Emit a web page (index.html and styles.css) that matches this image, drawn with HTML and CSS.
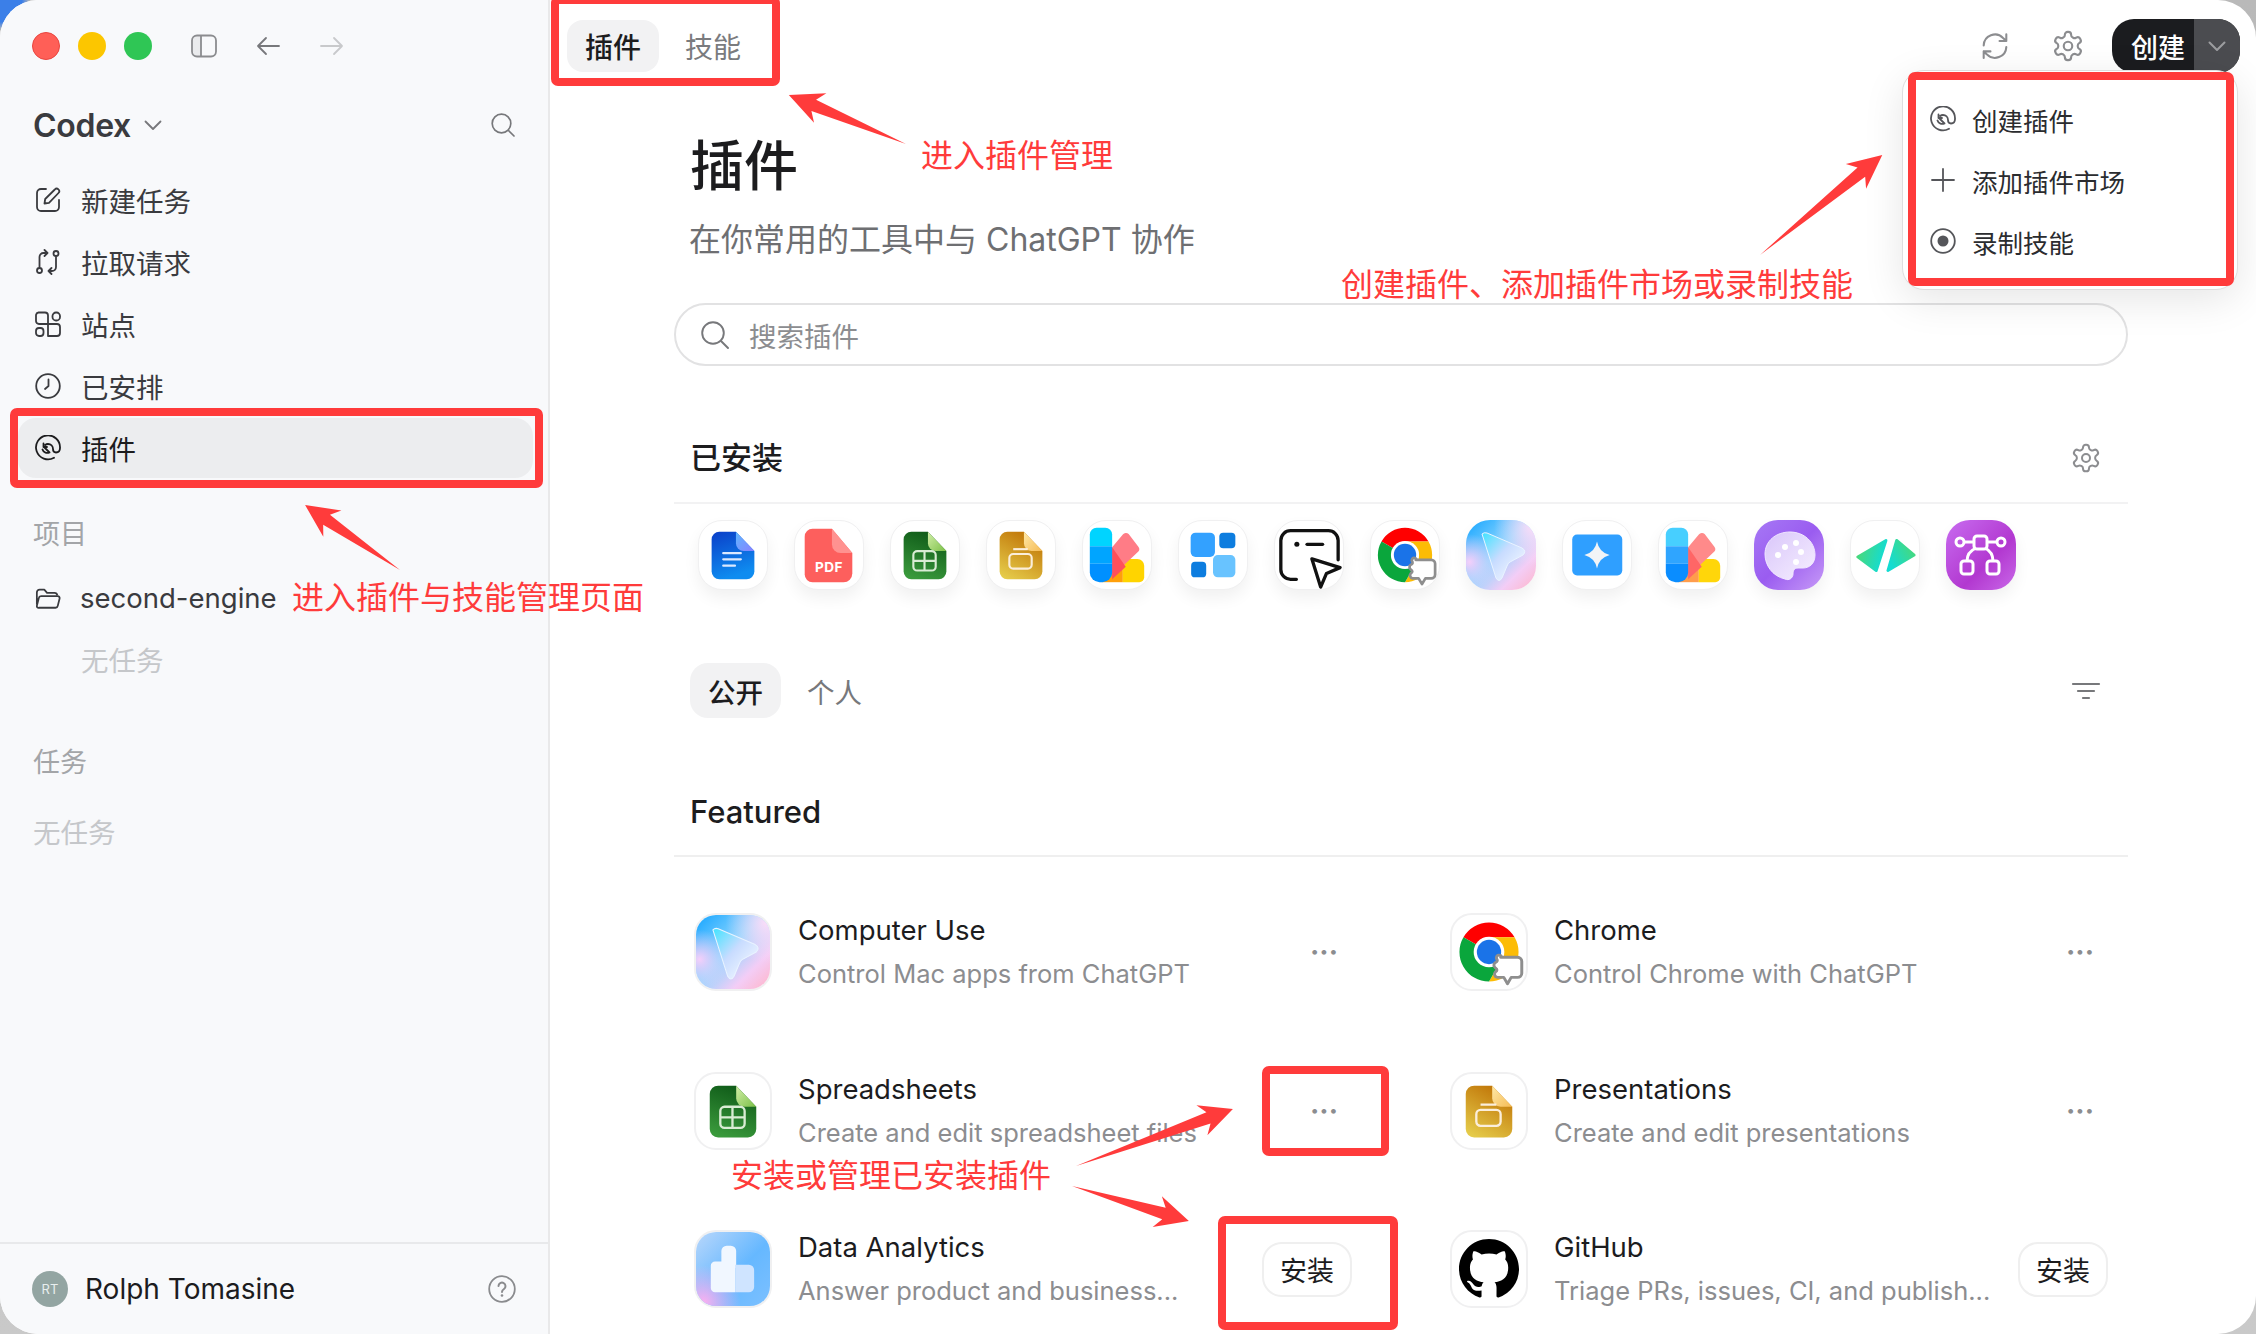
FILE: index.html
```html
<!DOCTYPE html>
<html lang="zh-CN">
<head>
<meta charset="utf-8">
<title>Codex 插件</title>
<link rel="stylesheet" href="styles.css">
</head>
<body>
<svg class="defs" aria-hidden="true">
  <defs>
    <linearGradient id="gDoc" x1="0" y1="0" x2="0.3" y2="1"><stop offset="0" stop-color="#0a3fc8"/><stop offset="1" stop-color="#0f8cf0"/></linearGradient>
    <linearGradient id="gDocF" x1="0" y1="0" x2="1" y2="1"><stop offset="0" stop-color="#5bb8ff"/><stop offset="1" stop-color="#8a80ff"/></linearGradient>
    <linearGradient id="gSheet" x1="0.6" y1="0" x2="0.3" y2="1"><stop offset="0" stop-color="#0f5a18"/><stop offset="1" stop-color="#3a9a3c"/></linearGradient>
    <linearGradient id="gSheetF" x1="0" y1="0" x2="1" y2="1"><stop offset="0" stop-color="#d2efa8"/><stop offset="1" stop-color="#7cc048"/></linearGradient>
    <linearGradient id="gSlide" x1="0.7" y1="0" x2="0.2" y2="1"><stop offset="0" stop-color="#bf7205"/><stop offset="1" stop-color="#e5cb4a"/></linearGradient>
    <linearGradient id="gSlideF" x1="0" y1="0" x2="1" y2="1"><stop offset="0" stop-color="#ffe9a8"/><stop offset="1" stop-color="#f5bb55"/></linearGradient>
    <linearGradient id="gCu" x1="0" y1="0" x2="1" y2="1"><stop offset="0" stop-color="#15a4ff"/><stop offset="0.45" stop-color="#8cd6ff"/><stop offset="0.75" stop-color="#f3cdf6"/><stop offset="1" stop-color="#ffb4c8"/></linearGradient>
    <radialGradient id="gCuP" cx="0.95" cy="0.1" r="0.55"><stop offset="0" stop-color="#fbdcf8"/><stop offset="1" stop-color="#fbdcf8" stop-opacity="0"/></radialGradient>
    <radialGradient id="gCuL" cx="0.05" cy="0.6" r="0.4"><stop offset="0" stop-color="#f4cffa"/><stop offset="1" stop-color="#f4cffa" stop-opacity="0"/></radialGradient>
    <linearGradient id="gCuA" x1="0" y1="0" x2="1" y2="1"><stop offset="0" stop-color="#3fe3ff"/><stop offset="0.45" stop-color="#c8dcff"/><stop offset="1" stop-color="#ffffff"/></linearGradient>
    <linearGradient id="gPal" x1="0" y1="0" x2="1" y2="1"><stop offset="0" stop-color="#a678f5"/><stop offset="0.5" stop-color="#9a5cf0"/><stop offset="1" stop-color="#c79af7"/></linearGradient>
    <linearGradient id="gPalW" x1="0" y1="0" x2="1" y2="1"><stop offset="0" stop-color="#d9c6fa"/><stop offset="1" stop-color="#f6efff"/></linearGradient>
    <linearGradient id="gCode" x1="0" y1="0" x2="1" y2="0.3"><stop offset="0" stop-color="#4fd870"/><stop offset="1" stop-color="#14dcd2"/></linearGradient>
    <linearGradient id="gCode2" x1="1" y1="0" x2="0" y2="0.6"><stop offset="0" stop-color="#4fd870"/><stop offset="1" stop-color="#14dcd2"/></linearGradient>
    <linearGradient id="gBez" x1="0" y1="0" x2="1" y2="1"><stop offset="0" stop-color="#c86cf0"/><stop offset="0.6" stop-color="#b238d0"/><stop offset="1" stop-color="#c968e8"/></linearGradient>
    <linearGradient id="gData" x1="0" y1="0" x2="1" y2="1"><stop offset="0" stop-color="#b9d7fb"/><stop offset="0.55" stop-color="#66b8ff"/><stop offset="1" stop-color="#7cc0ff"/></linearGradient>
    <radialGradient id="gDataP" cx="0.1" cy="0.95" r="0.5"><stop offset="0" stop-color="#fbb0f0"/><stop offset="1" stop-color="#fbb0f0" stop-opacity="0"/></radialGradient>

    <symbol id="i-docs" viewBox="0 0 70 70">
      <path fill="url(#gDoc)" d="M21 11h17l19 20v21a8 8 0 0 1-8 8H21a8 8 0 0 1-8-8V19a8 8 0 0 1 8-8z"/>
      <path fill="url(#gDocF)" d="M38 11l19 20H46a8 8 0 0 1-8-8z"/>
      <path fill="none" stroke="#dbe9ff" stroke-width="2.4" stroke-linecap="round" d="M25 33h18M25 39.500h18M25 46h12"/>
    </symbol>
    <symbol id="i-pdf" viewBox="0 0 70 70">
      <path fill="#fd5f5d" d="M18 8h20l21 25v21a9 9 0 0 1-9 9H18a8 8 0 0 1-8-8V16a8 8 0 0 1 8-8z"/>
      <path fill="#ff9290" d="M38 8l21 25H47a9 9 0 0 1-9-9z"/>
      <text x="35" y="53" text-anchor="middle" class="pdf-text">PDF</text>
    </symbol>
    <symbol id="i-sheet" viewBox="0 0 70 70">
      <path fill="url(#gSheet)" d="M21 11h17l19 20v21a8 8 0 0 1-8 8H21a8 8 0 0 1-8-8V19a8 8 0 0 1 8-8z"/>
      <path fill="url(#gSheetF)" d="M38 11l19 20H46a8 8 0 0 1-8-8z"/>
      <rect x="23" y="31" width="23" height="20" rx="4" fill="none" stroke="#d9ecd4" stroke-width="2.2"/>
      <path fill="none" stroke="#d9ecd4" stroke-width="2.2" d="M34.500 31v20M23 41h23"/>
    </symbol>
    <symbol id="i-slide" viewBox="0 0 70 70">
      <path fill="url(#gSlide)" d="M21 11h17l19 20v21a8 8 0 0 1-8 8H21a8 8 0 0 1-8-8V19a8 8 0 0 1 8-8z"/>
      <path fill="url(#gSlideF)" d="M38 11l19 20H46a8 8 0 0 1-8-8z"/>
      <rect x="23" y="34" width="23" height="15" rx="4" fill="none" stroke="#fbeedb" stroke-width="2.2"/>
      <path fill="none" stroke="#fbeedb" stroke-width="2.200" d="M27 29h15"/>
    </symbol>
    <symbol id="i-swatch" viewBox="0 0 70 70">
      <path fill="#ff9f0a" d="M20 48h21v15H20z"/>
      <path fill="#ffd400" d="M41 39h15a7 7 0 0 1 7 7v12a5 5 0 0 1-5 5H41z"/>
      <path fill="#ff7c86" d="M30 27l11-13a4 4 0 0 1 6-.500l10 13a4 4 0 0 1 0 5L30 57z"/>
      <path fill="#ff4f5a" d="M30 27l14 20-14 13z"/>
      <path fill="#00d4ff" d="M14 7h9a7 7 0 0 1 7 7v12H7V14a7 7 0 0 1 7-7z"/>
      <path fill="#00a5ff" d="M7 26h23v18H7z"/>
      <path fill="#0090ff" d="M7 44h23v9a10 10 0 0 1-10 10h-3a10 10 0 0 1-10-10z"/>
    </symbol>
    <symbol id="i-swatch2" viewBox="0 0 70 70">
      <path fill="#ff9d4c" d="M20 48h21v15H20z"/>
      <path fill="#ffd60a" d="M41 39h15a7 7 0 0 1 7 7v12a5 5 0 0 1-5 5H41z"/>
      <path fill="#ff8a8a" d="M30 27l11-13a4 4 0 0 1 6-.500l10 13a4 4 0 0 1 0 5L30 57z"/>
      <path fill="#ff6666" d="M30 27l14 20-14 13z"/>
      <path fill="#47cfff" d="M14 7h9a7 7 0 0 1 7 7v12H7V14a7 7 0 0 1 7-7z"/>
      <path fill="#2fa5ff" d="M7 26h23v18H7z"/>
      <path fill="#0a8dff" d="M7 44h23v9a10 10 0 0 1-10 10h-3a10 10 0 0 1-10-10z"/>
    </symbol>
    <symbol id="i-blocks" viewBox="0 0 70 70">
      <rect x="12" y="12" width="25" height="25" rx="5" fill="#33a1ff"/>
      <rect x="41.500" y="12" width="16.500" height="16" rx="4" fill="#0d7ddf"/>
      <rect x="12.500" y="42" width="15.500" height="16" rx="4" fill="#0d7ddf"/>
      <rect x="35" y="35" width="23" height="23" rx="5" fill="#68c3ff"/>
    </symbol>
    <symbol id="i-cursor" viewBox="0 0 70 70">
      <path fill="none" stroke="#111" stroke-width="3.400" stroke-linecap="round" d="M22 60h-6A10 10 0 0 1 6 50V20a10 10 0 0 1 10-10h39a10 10 0 0 1 10 10v20"/>
      <circle cx="22.500" cy="24" r="2.600" fill="#111"/>
      <path stroke="#111" stroke-width="3.400" stroke-linecap="round" d="M33 24h16"/>
      <path fill="#fff" stroke="#111" stroke-width="3.400" stroke-linejoin="round" d="M38 39l29 9-14 6-6 14z"/>
    </symbol>
    <symbol id="i-chrome" viewBox="0 0 70 70">
      <path fill="#f00" d="M35 7a28 28 0 0 1 24.200 14H35a14 14 0 0 0-12.100 7L10.800 21A28 28 0 0 1 35 7z"/>
      <path fill="#fcbc05" d="M59.200 21A28 28 0 0 1 35 63l12.100-21A14 14 0 0 0 35 21z"/>
      <path fill="#0aa63c" d="M10.800 21A28 28 0 0 0 35 63l12.100-21a14 14 0 0 1-24.200-14z"/>
      <circle cx="35" cy="35" r="14.500" fill="#fff"/>
      <circle cx="35" cy="35" r="11.500" fill="#1a73e8"/>
      <path fill="#fff" stroke="#8e8e8e" stroke-width="2.800" stroke-linejoin="round" d="M46 40h16a4 4 0 0 1 4 4v11a4 4 0 0 1-4 4h-6l-3.500 6-3.500-6h-6a3 3 0 0 1-2-5q3-2 0-4a3 3 0 0 1 0-5q3-1 1-4a1 1 0 0 1 5-1z"/>
    </symbol>
    <symbol id="i-cu" viewBox="0 0 70 70">
      <rect width="70" height="70" rx="14" fill="url(#gCu)"/>
      <rect width="70" height="70" rx="14" fill="url(#gCuP)"/>
      <rect width="70" height="70" rx="14" fill="url(#gCuL)"/>
      <path fill="url(#gCuA)" stroke="#e9f3ff" stroke-width="1" stroke-linejoin="round" d="M16 14q2-2 5-1l35 15q5 3 1 7l-13 7q-2 1-3 4l-5 12q-3 5-6 0z"/>
    </symbol>
    <symbol id="i-spark" viewBox="0 0 70 70">
      <rect x="9.500" y="14" width="51.500" height="42" rx="5" fill="#2f9fff"/>
      <path fill="#f2f4f7" d="M35 21q2 11 13 14-11 3-13 14-2-11-13-14 11-3 13-14z"/>
    </symbol>
    <symbol id="i-palette" viewBox="0 0 70 70">
      <rect width="70" height="70" rx="15" fill="url(#gPal)"/>
      <path fill="url(#gPalW)" stroke="#f1e8ff" d="M36 12c14 0 25 10 25 23 0 9-6 13-12 13h-5c-4 0-5 3-5 6 0 4-4 7-8 5C18 56 11 45 11 34c0-13 11-22 25-22z"/>
      <g fill="#fff"><circle cx="24" cy="35" r="3"/><circle cx="31" cy="27" r="3"/><circle cx="42" cy="23" r="3"/><circle cx="47" cy="32" r="3"/><circle cx="42" cy="42" r="3"/></g>
    </symbol>
    <symbol id="i-code" viewBox="0 0 70 70">
      <path fill="url(#gCode)" stroke="url(#gCode)" stroke-width="3" stroke-linejoin="round" d="M36 20L7 37l19 14z"/>
      <path fill="url(#gCode2)" stroke="url(#gCode2)" stroke-width="3" stroke-linejoin="round" d="M47 20l18 15-27 16z"/>
    </symbol>
    <symbol id="i-bezier" viewBox="0 0 70 70">
      <rect width="70" height="70" rx="15" fill="url(#gBez)"/>
      <g fill="none" stroke="#fff" stroke-width="3">
        <path d="M18 22h10M41 22h10M30 28Q21 32 21 41M39 28q8 4 8 13"/>
        <circle cx="14" cy="22" r="4"/><circle cx="55" cy="22" r="4"/>
        <rect x="28" y="16" width="13" height="13" rx="3"/>
        <rect x="15" y="41" width="12" height="13" rx="3"/>
        <rect x="41" y="41" width="12" height="13" rx="3"/>
      </g>
    </symbol>
    <symbol id="i-data" viewBox="0 0 70 70">
      <rect width="70" height="70" rx="15" fill="url(#gData)"/>
      <rect width="70" height="70" rx="15" fill="url(#gDataP)"/>
      <path fill="#f1f7ff" d="M14 32a4 4 0 0 1 4-4h6V18a5 5 0 0 1 5-5h4a5 5 0 0 1 5 5v16h-1v23H18a4 4 0 0 1-4-4z"/>
      <path fill="#cfe4ff" d="M37 31h13a5 5 0 0 1 5 5v16a5 5 0 0 1-5 5H37z"/>
    </symbol>
    <symbol id="i-github" viewBox="0 0 16 16">
      <path fill="#000" d="M8 0C3.580 0 0 3.580 0 8c0 3.540 2.290 6.530 5.470 7.590.4.070.55-.17.55-.38 0-.19-.01-.82-.01-1.490-2.010.37-2.530-.49-2.690-.94-.09-.23-.48-.94-.82-1.130-.28-.15-.68-.52-.01-.53.63-.01 1.080.58 1.230.82.72 1.210 1.870.87 2.330.66.07-.52.28-.87.51-1.070-1.780-.2-3.640-.89-3.640-3.950 0-.87.31-1.590.82-2.150-.08-.2-.36-1.020.08-2.120 0 0 .67-.21 2.200.82.64-.18 1.320-.27 2-.27.68 0 1.360.09 2 .27 1.530-1.040 2.200-.82 2.200-.82.44 1.100.16 1.920.08 2.120.51.56.82 1.270.82 2.150 0 3.070-1.870 3.750-3.650 3.950.29.25.54.73.54 1.480 0 1.070-.01 1.930-.01 2.200 0 .21.15.46.55.38A8.013 8.013 0 0 0 16 8c0-4.420-3.580-8-8-8z"/>
    </symbol>
    <symbol id="i-plug" viewBox="0 0 26 26">
      <path fill="none" stroke="currentColor" stroke-width="1.800" stroke-linecap="round" stroke-linejoin="round" d="M19 22.800A12 12 0 1 1 25 13c0 2.500-1.500 4.500-4 4.500-2 0-3-1.500-3-3.500 0-3-2.200-5-5-5-1 0-2 .3-2.800 1M8.500 8.500v3.500H12M9 12l5.500 5.500c-2.500 1-6 .3-7-3"/>
    </symbol>
    <symbol id="i-gear" viewBox="0 0 24 24">
      <path fill="none" stroke="currentColor" stroke-width="1.500" stroke-linejoin="round" d="M12.220 2h-.44a2 2 0 0 0-2 2v.18a2 2 0 0 1-1 1.730l-.43.25a2 2 0 0 1-2 0l-.15-.08a2 2 0 0 0-2.730.73l-.22.38a2 2 0 0 0 .73 2.730l.15.1a2 2 0 0 1 1 1.720v.51a2 2 0 0 1-1 1.740l-.15.09a2 2 0 0 0-.73 2.730l.22.38a2 2 0 0 0 2.730.73l.15-.08a2 2 0 0 1 2 0l.43.25a2 2 0 0 1 1 1.730V20a2 2 0 0 0 2 2h.44a2 2 0 0 0 2-2v-.18a2 2 0 0 1 1-1.730l.43-.25a2 2 0 0 1 2 0l.15.08a2 2 0 0 0 2.730-.73l.22-.39a2 2 0 0 0-.73-2.730l-.15-.08a2 2 0 0 1-1-1.740v-.5a2 2 0 0 1 1-1.740l.15-.09a2 2 0 0 0 .73-2.730l-.22-.38a2 2 0 0 0-2.730-.73l-.15.08a2 2 0 0 1-2 0l-.43-.25a2 2 0 0 1-1-1.730V4a2 2 0 0 0-2-2z"/>
      <circle cx="12" cy="12" r="3" fill="none" stroke="currentColor" stroke-width="1.500"/>
    </symbol>
  </defs>
</svg>

<div class="window">
  <aside class="sidebar">
    <div class="chrome-row">
      <span class="light light-red"></span><span class="light light-yellow"></span><span class="light light-green"></span>
      <svg class="ico-toggle" viewBox="0 0 26 24"><rect x="1" y="1.500" width="24" height="21" rx="5" fill="none" stroke="currentColor" stroke-width="1.800"/><path d="M10 2v20" stroke="currentColor" stroke-width="1.800"/><path d="M2 6.500a4 4 0 0 1 4-4h4v19H6a4 4 0 0 1-4-4z" fill="currentColor" opacity=".12"/></svg>
      <svg class="ico-arrow" viewBox="0 0 24 20"><path d="M23 10H2M10 2l-8 8 8 8" fill="none" stroke="currentColor" stroke-width="1.800" stroke-linecap="round" stroke-linejoin="round"/></svg>
      <svg class="ico-arrow ico-arrow-off" viewBox="0 0 24 20"><path d="M1 10h21M14 2l8 8-8 8" fill="none" stroke="currentColor" stroke-width="1.800" stroke-linecap="round" stroke-linejoin="round"/></svg>
    </div>
    <div class="brand-row">
      <span class="brand">Codex</span>
      <svg class="ico-chev" viewBox="0 0 18 11"><path d="M1.500 1.500L9 9l7.500-7.500" fill="none" stroke="currentColor" stroke-width="1.800" stroke-linecap="round" stroke-linejoin="round"/></svg>
      <svg class="ico-search" viewBox="0 0 24 24"><circle cx="10.500" cy="10.500" r="9.300" fill="none" stroke="currentColor" stroke-width="1.700"/><path d="M17.500 17.500l5.500 5.500" stroke="currentColor" stroke-width="1.700" stroke-linecap="round"/></svg>
    </div>
    <nav class="nav">
      <a class="nav-item"><svg class="nav-ico" viewBox="0 0 26 26"><path d="M11 2H6a4 4 0 0 0-4 4v14a4 4 0 0 0 4 4h14a4 4 0 0 0 4-4v-7" fill="none" stroke="currentColor" stroke-width="1.800" stroke-linecap="round"/><path d="M9.500 16.500l.7-4.500L19.800 2.500a2.500 2.500 0 0 1 3.700 3.500L14 15.800z" fill="none" stroke="currentColor" stroke-width="1.800" stroke-linejoin="round"/></svg>新建任务</a>
      <a class="nav-item"><svg class="nav-ico" viewBox="0 0 26 26"><g fill="none" stroke="currentColor" stroke-width="1.800" stroke-linecap="round" stroke-linejoin="round"><circle cx="4.500" cy="21.500" r="2.500"/><circle cx="21" cy="4.500" r="2.500"/><path d="M4.500 18V8a4 4 0 0 1 4-4H12M9.500 1L12.500 4l-3 3M21 8v10a4 4 0 0 1-4 4h-3.500M16.500 19l-3 3 3 3"/></g></svg>拉取请求</a>
      <a class="nav-item"><svg class="nav-ico" viewBox="0 0 26 26"><g fill="none" stroke="currentColor" stroke-width="1.800" stroke-linejoin="round"><path d="M4 1.500h6a3 3 0 0 1 3 3v8.500H4a3 3 0 0 1-3-3V4a3 3 0 0 1 2.500-2.500z"/><rect x="17.500" y="1.500" width="7.500" height="8" rx="3.500"/><rect x="1" y="17" width="7.500" height="8" rx="3"/><path d="M13 13h9a3 3 0 0 1 3 3v6a3 3 0 0 1-3 3h-9z"/></g></svg>站点</a>
      <a class="nav-item"><svg class="nav-ico" viewBox="0 0 26 26"><circle cx="13" cy="13" r="11.800" fill="none" stroke="currentColor" stroke-width="1.800"/><path d="M13.500 6.500V13l-3.500 3" fill="none" stroke="currentColor" stroke-width="1.800" stroke-linecap="round" stroke-linejoin="round"/></svg>已安排</a>
      <a class="nav-item nav-item-active"><svg class="nav-ico"><use href="#i-plug"/></svg>插件</a>
    </nav>
    <div class="side-label side-label-first">项目</div>
    <div class="project"><svg class="nav-ico" viewBox="0 0 28 26"><path d="M2 20V7a3 3 0 0 1 3-3h5l3 3.500h8a3 3 0 0 1 3 2.500M4 23.500h18a2.500 2.500 0 0 0 2.500-2l2-8a2 2 0 0 0-2-2.500H6.500a2.500 2.500 0 0 0-2.400 2L2 21.500a1.700 1.700 0 0 0 2 2z" fill="none" stroke="currentColor" stroke-width="1.900" stroke-linejoin="round"/></svg>second-engine</div>
    <div class="empty empty-indent">无任务</div>
    <div class="side-label side-label-second">任务</div>
    <div class="empty empty-flat">无任务</div>
    <footer class="side-foot">
      <span class="avatar">RT</span>
      <span class="user">Rolph Tomasine</span>
      <svg class="ico-help" viewBox="0 0 28 28"><circle cx="14" cy="14" r="12.800" fill="none" stroke="currentColor" stroke-width="1.800"/><path d="M10.500 11a3.500 3.500 0 1 1 5.500 3c-1.300.9-2 1.500-2 3" fill="none" stroke="currentColor" stroke-width="2" stroke-linecap="round"/><circle cx="14" cy="20.500" r="1.300" fill="currentColor"/></svg>
    </footer>
  </aside>

  <main class="main">
    <header class="topbar">
      <div class="tabs"><span class="tab tab-active">插件</span><span class="tab">技能</span></div>
      <div class="top-actions">
        <svg class="ico-top ico-refresh" viewBox="0 0 26 26"><path d="M2.500 12.500A10.500 10.500 0 0 1 20.500 5.500l3 2.800M23.500 2v6.300h-6.300M23.500 14A10.500 10.500 0 0 1 5.500 20.800l-3-2.800M2.500 24.200V18h6.300" fill="none" stroke="currentColor" stroke-width="1.900" stroke-linecap="round" stroke-linejoin="round"/></svg>
        <svg class="ico-top ico-gear"><use href="#i-gear"/></svg>
        <div class="create"><span class="create-main">创建</span><span class="create-chev"><svg viewBox="0 0 18 11"><path d="M1.500 1.500L9 9l7.500-7.500" fill="none" stroke="currentColor" stroke-width="2" stroke-linecap="round" stroke-linejoin="round"/></svg></span></div>
      </div>
    </header>

    <section class="content">
      <h1 class="title">插件</h1>
      <p class="subtitle">在你常用的工具中与 ChatGPT 协作</p>
      <div class="search">
        <svg class="ico-search2" viewBox="0 0 28 28"><circle cx="12" cy="12" r="10.800" fill="none" stroke="currentColor" stroke-width="1.900"/><path d="M20 20l7 7" stroke="currentColor" stroke-width="1.900" stroke-linecap="round"/></svg>
        <span class="placeholder">搜索插件</span>
      </div>

      <div class="installed-head">
        <h2 class="h2">已安装</h2>
        <svg class="ico-head"><use href="#i-gear"/></svg>
      </div>
      <div class="icon-row">
        <span class="card"><svg><use href="#i-docs"/></svg></span>
        <span class="card"><svg><use href="#i-pdf"/></svg></span>
        <span class="card"><svg><use href="#i-sheet"/></svg></span>
        <span class="card"><svg><use href="#i-slide"/></svg></span>
        <span class="card"><svg><use href="#i-swatch"/></svg></span>
        <span class="card"><svg><use href="#i-blocks"/></svg></span>
        <span class="card"><svg><use href="#i-cursor"/></svg></span>
        <span class="card"><svg><use href="#i-chrome"/></svg></span>
        <span class="card card-bleed"><svg><use href="#i-cu"/></svg></span>
        <span class="card"><svg><use href="#i-spark"/></svg></span>
        <span class="card"><svg><use href="#i-swatch2"/></svg></span>
        <span class="card card-bleed"><svg><use href="#i-palette"/></svg></span>
        <span class="card"><svg><use href="#i-code"/></svg></span>
        <span class="card card-bleed"><svg><use href="#i-bezier"/></svg></span>
      </div>

      <div class="filter-row">
        <span class="pill pill-active">公开</span>
        <span class="pill">个人</span>
        <svg class="ico-filter" viewBox="0 0 30 20"><path d="M2 3h26M7 10h16M12 17h6" stroke="currentColor" stroke-width="2.200" stroke-linecap="round"/></svg>
      </div>

      <h2 class="h2 featured">Featured</h2>

      <div class="grid">
        <article class="row">
          <span class="tile tile-bleed"><svg><use href="#i-cu"/></svg></span>
          <div class="info"><div class="name">Computer Use</div><div class="desc">Control Mac apps from ChatGPT</div></div>
          <span class="more">···</span>
        </article>
        <article class="row">
          <span class="tile"><svg><use href="#i-chrome"/></svg></span>
          <div class="info"><div class="name">Chrome</div><div class="desc">Control Chrome with ChatGPT</div></div>
          <span class="more">···</span>
        </article>
        <article class="row">
          <span class="tile"><svg><use href="#i-sheet"/></svg></span>
          <div class="info"><div class="name">Spreadsheets</div><div class="desc">Create and edit spreadsheet files</div></div>
          <span class="more">···</span>
        </article>
        <article class="row">
          <span class="tile"><svg><use href="#i-slide"/></svg></span>
          <div class="info"><div class="name">Presentations</div><div class="desc">Create and edit presentations</div></div>
          <span class="more">···</span>
        </article>
        <article class="row">
          <span class="tile tile-bleed"><svg><use href="#i-data"/></svg></span>
          <div class="info"><div class="name">Data Analytics</div><div class="desc">Answer product and business...</div></div>
          <span class="install">安装</span>
        </article>
        <article class="row">
          <span class="tile tile-gh"><svg><use href="#i-github"/></svg></span>
          <div class="info"><div class="name">GitHub</div><div class="desc">Triage PRs, issues, CI, and publish...</div></div>
          <span class="install">安装</span>
        </article>
      </div>
    </section>

    <div class="menu">
      <div class="menu-item"><svg class="menu-ico"><use href="#i-plug"/></svg>创建插件</div>
      <div class="menu-item"><svg class="menu-ico" viewBox="0 0 26 26"><path d="M13 2v22M2 13h22" stroke="currentColor" stroke-width="1.800" stroke-linecap="round"/></svg>添加插件市场</div>
      <div class="menu-item"><svg class="menu-ico" viewBox="0 0 26 26"><circle cx="13" cy="13" r="11.800" fill="none" stroke="currentColor" stroke-width="1.800"/><circle cx="13" cy="13" r="5.500" fill="currentColor"/></svg>录制技能</div>
    </div>
  </main>
</div>

<div class="marks">
  <span class="box box-nav"></span>
  <span class="box box-tabs"></span>
  <span class="box box-menu"></span>
  <span class="box box-more"></span>
  <span class="box box-install"></span>
  <span class="note note-tabs">进入插件管理</span>
  <span class="note note-menu">创建插件、添加插件市场或录制技能</span>
  <span class="note note-nav">进入插件与技能管理页面</span>
  <span class="note note-manage">安装或管理已安装插件</span>
  <svg class="arrows" viewBox="0 0 2256 1334">
    <g fill="#ff3b3b">
      <polygon transform="translate(906 144) rotate(202.700)" points="0,0 100,-6 93,-16 127,0 93,16 100,6"/>
      <polygon transform="translate(1760 255) rotate(-39.300)" points="0,0 131,-6 124,-16 158,0 124,16 131,6"/>
      <polygon transform="translate(400 570) rotate(214.400)" points="0,0 89,-6 82,-16 115,0 82,16 89,6"/>
      <polygon transform="translate(1076 1166) rotate(-20)" points="0,0 141,-6 134,-16 167,0 134,16 141,6"/>
      <polygon transform="translate(1072 1186) rotate(16.700)" points="0,0 96,-6 89,-16 122,0 89,16 96,6"/>
    </g>
  </svg>
</div>
</body>
</html>
```

FILE: styles.css
```css
* { box-sizing: border-box; }
html, body { margin: 0; height: 100%; }
body {
  position: relative;
  width: 2256px;
  height: 1334px;
  overflow: hidden;
  background:
    radial-gradient(circle at 0 0, #3b7fe8 0 22px, rgba(59,127,232,0) 30px),
    linear-gradient(#b9b9b9, #c9c9c9);
  font-family: Inter, "Noto Sans CJK SC", sans-serif;
  color: #1c1c1e;
}
svg { display: block; }
.defs { position: absolute; width: 0; height: 0; }
.pdf-text { font: 700 14px Inter, sans-serif; fill: #fff; letter-spacing: .5px; }

.window {
  display: flex;
  width: 2256px;
  height: 1334px;
  border-radius: 38px;
  overflow: hidden;
  background: #fff;
}

/* sidebar */
.sidebar {
  display: flex;
  flex-direction: column;
  flex: none;
  width: 550px;
  background: #f8f9fb;
  border-right: 2px solid #e9e9ea;
  color: #3a3b3f;
}
.chrome-row { display: flex; align-items: center; height: 92px; padding-left: 32px; }
.light { width: 28px; height: 28px; border-radius: 50%; margin-right: 18px; }
.light-red { background: #ff5f57; border: 1px solid #e8453f; }
.light-yellow { background: #fcc600; }
.light-green { background: #2fc655; margin-right: 0; }
.ico-toggle { width: 26px; height: 24px; margin-left: 39px; color: #8b8c8f; }
.ico-arrow { width: 24px; height: 20px; margin-left: 39px; color: #77787b; }
.ico-arrow-off { margin-left: 40px; color: #c8c9cb; }

.brand-row { display: flex; align-items: center; height: 66px; padding: 0 33px 0 33px; }
.brand { font-size: 32px; font-weight: 600; letter-spacing: -.3px; color: #3a3b3f; }
.ico-chev { width: 18px; height: 11px; margin-left: 13px; color: #77787b; }
.ico-search { width: 24px; height: 24px; margin-left: auto; color: #77787b; }

.nav { display: flex; flex-direction: column; gap: 2px; margin: 12px 15px 0 18px; }
.nav-item {
  display: flex;
  align-items: center;
  gap: 20px;
  height: 60px;
  padding-left: 17px;
  border-radius: 18px;
  font-size: 27.500px;
}
.nav-item-active { background: #ecedef; color: #1c1c1e; }
.nav-ico { flex: none; width: 26px; height: 26px; }

.side-label { padding-left: 33px; height: 40px; line-height: 40px; font-size: 27px; color: #a3a5a8; }
.side-label-first { margin-top: 37px; }
.side-label-second { margin-top: 52px; }
.project { display: flex; align-items: center; gap: 19px; height: 60px; margin-top: 13px; padding-left: 35px; font-size: 27.500px; }
.empty { height: 60px; line-height: 60px; font-size: 27.500px; color: #c5c7ca; }
.empty-indent { margin-top: 3px; padding-left: 81px; }
.empty-flat { margin-top: 20px; padding-left: 33px; }
.side-foot {
  display: flex;
  align-items: center;
  height: 92px;
  margin-top: auto;
  padding: 0 32px;
  border-top: 2px solid #e8e9eb;
}
.avatar {
  display: flex;
  align-items: center;
  justify-content: center;
  width: 36px;
  height: 36px;
  border-radius: 50%;
  background: #93a5a2;
  color: #e8eeee;
  font-size: 13px;
}
.user { margin-left: 17px; font-size: 28px; color: #1c1c1e; }
.ico-help { width: 28px; height: 28px; margin-left: auto; color: #8a8b8e; }

/* main */
.main { position: relative; flex: 1; min-width: 0; }
.topbar { display: flex; align-items: center; justify-content: space-between; height: 92px; padding: 0 16px 0 17px; }
.tabs { display: flex; }
.tab { display: flex; align-items: center; justify-content: center; width: 92px; height: 52px; border-radius: 16px; font-size: 28px; color: #7a7b7e; margin-right: 8px; }
.tab-active { background: #f2f2f3; color: #1c1c1e; font-weight: 500; }
.top-actions { display: flex; align-items: center; }
.ico-top { width: 28px; height: 28px; color: #8c8d90; }
.ico-gear { width: 34px; height: 34px; margin-left: 42px; }
.create { display: flex; width: 128px; height: 54px; margin-left: 27px; border-radius: 22px; overflow: hidden; color: #fff; background: #1b1c1f; }
.create-main { display: flex; align-items: center; justify-content: center; width: 82px; font-size: 27px; font-weight: 500; padding-left: 10px; }
.create-chev { display: flex; align-items: center; justify-content: center; flex: 1; background: #4b4c50; color: #9c9da0; }
.create-chev svg { width: 18px; height: 11px; }

.content { width: 1454px; margin-left: 124px; }
.title { margin: 40px 0 0 16px; font-size: 54px; font-weight: 500; line-height: 70px; color: #1c1c1e; }
.subtitle { margin: 18px 0 0 15px; font-size: 32px; line-height: 40px; color: #6e6f72; }
.search { display: flex; align-items: center; height: 63px; margin-top: 43px; padding-left: 25px; border: 2px solid #e2e2e3; border-radius: 32px; }
.ico-search2 { width: 28px; height: 28px; color: #77787b; }
.placeholder { margin-left: 20px; font-size: 27.500px; color: #8c8d90; }
.installed-head { display: flex; align-items: center; justify-content: space-between; height: 65px; margin-top: 73px; padding: 0 26px 25px 16px; border-bottom: 2px solid #f2f2f3; }
.h2 { margin: 0; font-size: 31px; font-weight: 500; line-height: 40px; }
.ico-head { width: 32px; height: 32px; color: #8c8d90; }
.icon-row { display: flex; gap: 26px; margin-top: 16px; padding-left: 24px; }
.card { flex: none; width: 70px; height: 70px; border-radius: 24px; border: 1px solid #f0f0f1; background: #fff; box-shadow: 0 8px 16px rgba(0,0,0,.06); }
.card svg { width: 68px; height: 68px; }
.card-bleed { border: 0; overflow: hidden; }
.card-bleed svg { width: 70px; height: 70px; }
.filter-row { display: flex; align-items: center; gap: 8px; height: 55px; margin-top: 73px; padding: 0 27px 0 16px; }
.pill { display: flex; align-items: center; justify-content: center; width: 91px; height: 55px; border-radius: 18px; font-size: 27.500px; color: #77787b; }
.pill-active { background: #f2f2f3; color: #1c1c1e; font-weight: 500; }
.ico-filter { width: 30px; height: 20px; margin-left: auto; color: #77787b; }
.featured { height: 65px; margin-top: 74px; padding: 0 0 25px 16px; border-bottom: 2px solid #efefef; }
.grid { display: grid; grid-template-columns: 698px 698px; column-gap: 58px; row-gap: 80.500px; margin-top: 56px; }
.row { display: flex; align-items: center; height: 78px; padding: 0 20px; }
.tile { flex: none; width: 78px; height: 78px; border-radius: 22px; border: 2px solid #f0f0f1; background: #fff; overflow: hidden; }
.tile svg { width: 74px; height: 74px; }
.tile-bleed svg { width: 74px; height: 74px; }
.tile-gh { display: flex; align-items: center; justify-content: center; }
.tile-gh svg { width: 60px; height: 60px; }
.info { flex: 1; min-width: 0; margin-left: 26px; }
.name { font-size: 27.500px; font-weight: 400; line-height: 36px; color: #1c1c1e; }
.desc { margin-top: 8px; font-size: 25.500px; line-height: 36px; color: #8c8d90; white-space: nowrap; }
.more { flex: none; width: 56px; text-align: center; font-size: 28px; font-weight: 700; line-height: 36px; color: #8c8d90; }
.install { display: flex; flex: none; align-items: center; justify-content: center; width: 90px; height: 55px; border: 2px solid #efefef; border-radius: 20px; background: #fff; font-size: 27px; color: #1c1c1e; }

.menu {
  position: absolute;
  top: 70px;
  left: 1352px;
  display: flex;
  flex-direction: column;
  justify-content: center;
  width: 336px;
  height: 220px;
  border: 1px solid #dedede;
  border-radius: 22px;
  background: #fff;
  box-shadow: 0 10px 40px rgba(0,0,0,.1);
}
.menu-item { display: flex; align-items: center; gap: 16px; height: 61px; padding-left: 27px; font-size: 25.500px; color: #2b2c2f; }
.menu-ico { flex: none; width: 26px; height: 26px; color: #55565a; }

/* annotations laid over the screenshot */
.marks { position: absolute; inset: 0; pointer-events: none; }
.arrows { position: absolute; inset: 0; width: 2256px; height: 1334px; }
.box { position: absolute; border: 8px solid #ff3b3b; border-radius: 7px; }
.box-nav { left: 10px; top: 408px; width: 533px; height: 80px; }
.box-tabs { left: 551px; top: -4px; width: 229px; height: 90px; }
.box-menu { left: 1908px; top: 72px; width: 326px; height: 214px; }
.box-more { left: 1262px; top: 1066px; width: 127px; height: 90px; }
.box-install { left: 1218px; top: 1216px; width: 180px; height: 114px; }
.note { position: absolute; font-size: 32px; line-height: 40px; color: #ff3b3b; white-space: nowrap; }
.note-tabs { left: 921px; top: 136px; }
.note-menu { left: 1341px; top: 265px; }
.note-nav { left: 292px; top: 578px; }
.note-manage { left: 731px; top: 1156px; }
```
